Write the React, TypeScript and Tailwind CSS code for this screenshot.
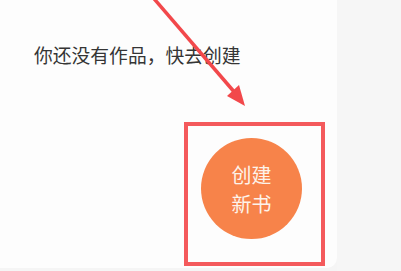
import React from "react";

export default function App() {
  return (
    <div className="flex h-[271px] w-[401px] overflow-hidden bg-[#f5f5f5]" style={{ fontFamily: '"Noto Sans CJK SC", "Noto Sans", sans-serif' }}>
      <div className="relative flex h-[268px] w-[337px] flex-col rounded-br-[10px] bg-[#fdfdfd]">
        <p className="pl-[34px] pt-[42px] text-[18.8px] leading-[25px] text-[#353535]">你还没有作品，快去创建</p>
        <div className="flex flex-1 items-end justify-end pb-[29px] pr-[35px]">
          <button className="flex h-[101px] w-[101px] flex-col items-center justify-center rounded-full bg-[#f7834a] text-[20px] leading-[29px] text-[#fdf3ea]">
            <span>创建</span>
            <span>新书</span>
          </button>
        </div>
        <div className="pointer-events-none absolute left-[184px] top-[122px] h-[144px] w-[141px] border-4 border-[#f45a5c]" />
        <svg className="pointer-events-none absolute left-0 top-0" width="337" height="271">
          <line x1="150" y1="-6" x2="236" y2="94" stroke="#f2484b" strokeWidth="3.5" />
          <polygon points="245,106 227,96 239,85" fill="#f2484b" />
        </svg>
      </div>
      <div className="flex-1 bg-[#f6f6f6]" />
    </div>
  );
}
